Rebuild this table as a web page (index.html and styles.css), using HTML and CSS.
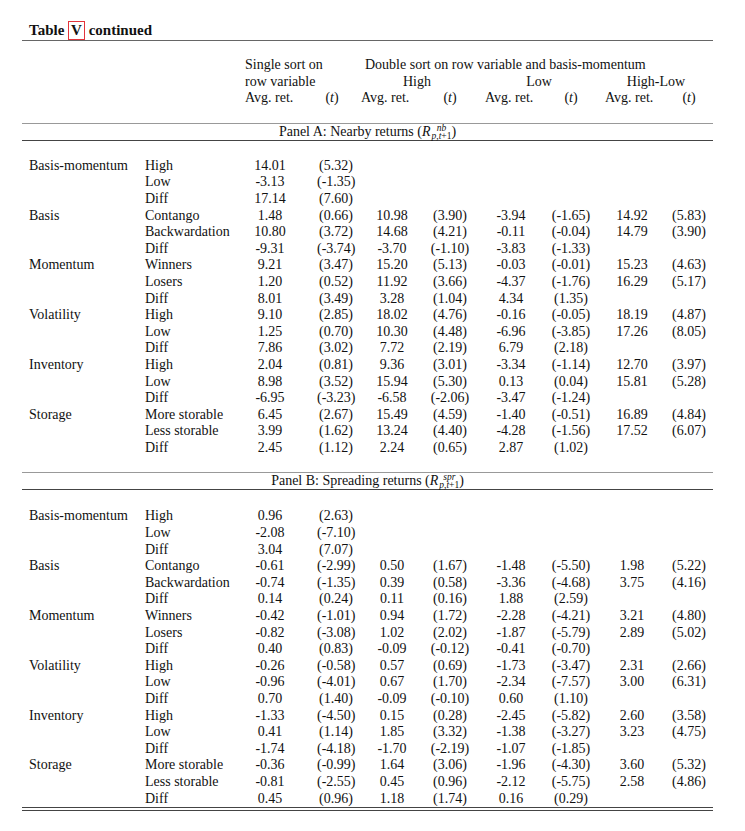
FILE: index.html
```html
<!DOCTYPE html>
<html lang="en">
<head>
  <meta charset="UTF-8">
  <meta name="viewport" content="width=device-width, initial-scale=1.0">
  <title>Table V continued</title>
  <link rel="stylesheet" href="styles.css">
</head>
<body>
  <div class="sheet">
    <div class="title">Table <span class="mark">V</span> continued</div>

    <table class="results">
      <colgroup>
        <col class="w-label"><col class="w-sub">
        <col class="w-a1"><col class="w-t1">
        <col class="w-a2"><col class="w-t2">
        <col class="w-a3"><col class="w-t3">
        <col class="w-a4"><col class="w-t4">
      </colgroup>
      <thead>
        <tr class="gap"><td colspan="10"></td></tr>
        <tr>
          <td></td><td></td>
          <td class="head-left" colspan="2">Single sort on</td>
          <td class="head-double" colspan="6">Double sort on row variable and basis-momentum</td>
        </tr>
        <tr>
          <td></td><td></td>
          <td class="head-left" colspan="2">row variable</td>
          <td class="head-center" colspan="2">High</td>
          <td class="head-center" colspan="2">Low</td>
          <td class="head-center" colspan="2">High-Low</td>
        </tr>
        <tr>
          <td></td><td></td>
          <td class="head-left">Avg. ret.</td><td class="head-t t1">(<i>t</i>)</td>
          <td class="head-left">Avg. ret.</td><td class="head-t t2">(<i>t</i>)</td>
          <td class="head-left">Avg. ret.</td><td class="head-t">(<i>t</i>)</td>
          <td class="head-left">Avg. ret.</td><td class="head-t">(<i>t</i>)</td>
        </tr>
        <tr class="gap"><td colspan="10"></td></tr>
      </thead>

      <!-- Panel A -->
      <tbody class="data">
        <tr class="panel-row">
          <td class="panel" colspan="10">Panel A: Nearby returns (<span class="math"><i>R</i><span class="scripts"><i>nb</i><span><i>p</i>,<i>t</i>+1</span></span></span>)</td>
        </tr>
        <tr class="gap-sm"><td colspan="10"></td></tr>
        <tr><td>Basis-momentum</td><td>High</td><td>14.01</td><td>(5.32)</td><td></td><td></td><td></td><td></td><td></td><td></td></tr>
        <tr><td></td><td>Low</td><td>-3.13</td><td>(-1.35)</td><td></td><td></td><td></td><td></td><td></td><td></td></tr>
        <tr><td></td><td>Diff</td><td>17.14</td><td>(7.60)</td><td></td><td></td><td></td><td></td><td></td><td></td></tr>
        <tr><td>Basis</td><td>Contango</td><td>1.48</td><td>(0.66)</td><td>10.98</td><td>(3.90)</td><td>-3.94</td><td>(-1.65)</td><td>14.92</td><td>(5.83)</td></tr>
        <tr><td></td><td>Backwardation</td><td>10.80</td><td>(3.72)</td><td>14.68</td><td>(4.21)</td><td>-0.11</td><td>(-0.04)</td><td>14.79</td><td>(3.90)</td></tr>
        <tr><td></td><td>Diff</td><td>-9.31</td><td>(-3.74)</td><td>-3.70</td><td>(-1.10)</td><td>-3.83</td><td>(-1.33)</td><td></td><td></td></tr>
        <tr><td>Momentum</td><td>Winners</td><td>9.21</td><td>(3.47)</td><td>15.20</td><td>(5.13)</td><td>-0.03</td><td>(-0.01)</td><td>15.23</td><td>(4.63)</td></tr>
        <tr><td></td><td>Losers</td><td>1.20</td><td>(0.52)</td><td>11.92</td><td>(3.66)</td><td>-4.37</td><td>(-1.76)</td><td>16.29</td><td>(5.17)</td></tr>
        <tr><td></td><td>Diff</td><td>8.01</td><td>(3.49)</td><td>3.28</td><td>(1.04)</td><td>4.34</td><td>(1.35)</td><td></td><td></td></tr>
        <tr><td>Volatility</td><td>High</td><td>9.10</td><td>(2.85)</td><td>18.02</td><td>(4.76)</td><td>-0.16</td><td>(-0.05)</td><td>18.19</td><td>(4.87)</td></tr>
        <tr><td></td><td>Low</td><td>1.25</td><td>(0.70)</td><td>10.30</td><td>(4.48)</td><td>-6.96</td><td>(-3.85)</td><td>17.26</td><td>(8.05)</td></tr>
        <tr><td></td><td>Diff</td><td>7.86</td><td>(3.02)</td><td>7.72</td><td>(2.19)</td><td>6.79</td><td>(2.18)</td><td></td><td></td></tr>
        <tr><td>Inventory</td><td>High</td><td>2.04</td><td>(0.81)</td><td>9.36</td><td>(3.01)</td><td>-3.34</td><td>(-1.14)</td><td>12.70</td><td>(3.97)</td></tr>
        <tr><td></td><td>Low</td><td>8.98</td><td>(3.52)</td><td>15.94</td><td>(5.30)</td><td>0.13</td><td>(0.04)</td><td>15.81</td><td>(5.28)</td></tr>
        <tr><td></td><td>Diff</td><td>-6.95</td><td>(-3.23)</td><td>-6.58</td><td>(-2.06)</td><td>-3.47</td><td>(-1.24)</td><td></td><td></td></tr>
        <tr><td>Storage</td><td>More storable</td><td>6.45</td><td>(2.67)</td><td>15.49</td><td>(4.59)</td><td>-1.40</td><td>(-0.51)</td><td>16.89</td><td>(4.84)</td></tr>
        <tr><td></td><td>Less storable</td><td>3.99</td><td>(1.62)</td><td>13.24</td><td>(4.40)</td><td>-4.28</td><td>(-1.56)</td><td>17.52</td><td>(6.07)</td></tr>
        <tr><td></td><td>Diff</td><td>2.45</td><td>(1.12)</td><td>2.24</td><td>(0.65)</td><td>2.87</td><td>(1.02)</td><td></td><td></td></tr>
        <tr class="gap-lg"><td colspan="10"></td></tr>
      </tbody>

      <!-- Panel B -->
      <tbody class="data last">
        <tr class="panel-row">
          <td class="panel" colspan="10">Panel B: Spreading returns (<span class="math"><i>R</i><span class="scripts"><i>spr</i><span><i>p</i>,<i>t</i>+1</span></span></span>)</td>
        </tr>
        <tr class="gap-sm b"><td colspan="10"></td></tr>
        <tr><td>Basis-momentum</td><td>High</td><td>0.96</td><td>(2.63)</td><td></td><td></td><td></td><td></td><td></td><td></td></tr>
        <tr><td></td><td>Low</td><td>-2.08</td><td>(-7.10)</td><td></td><td></td><td></td><td></td><td></td><td></td></tr>
        <tr><td></td><td>Diff</td><td>3.04</td><td>(7.07)</td><td></td><td></td><td></td><td></td><td></td><td></td></tr>
        <tr><td>Basis</td><td>Contango</td><td>-0.61</td><td>(-2.99)</td><td>0.50</td><td>(1.67)</td><td>-1.48</td><td>(-5.50)</td><td>1.98</td><td>(5.22)</td></tr>
        <tr><td></td><td>Backwardation</td><td>-0.74</td><td>(-1.35)</td><td>0.39</td><td>(0.58)</td><td>-3.36</td><td>(-4.68)</td><td>3.75</td><td>(4.16)</td></tr>
        <tr><td></td><td>Diff</td><td>0.14</td><td>(0.24)</td><td>0.11</td><td>(0.16)</td><td>1.88</td><td>(2.59)</td><td></td><td></td></tr>
        <tr><td>Momentum</td><td>Winners</td><td>-0.42</td><td>(-1.01)</td><td>0.94</td><td>(1.72)</td><td>-2.28</td><td>(-4.21)</td><td>3.21</td><td>(4.80)</td></tr>
        <tr><td></td><td>Losers</td><td>-0.82</td><td>(-3.08)</td><td>1.02</td><td>(2.02)</td><td>-1.87</td><td>(-5.79)</td><td>2.89</td><td>(5.02)</td></tr>
        <tr><td></td><td>Diff</td><td>0.40</td><td>(0.83)</td><td>-0.09</td><td>(-0.12)</td><td>-0.41</td><td>(-0.70)</td><td></td><td></td></tr>
        <tr><td>Volatility</td><td>High</td><td>-0.26</td><td>(-0.58)</td><td>0.57</td><td>(0.69)</td><td>-1.73</td><td>(-3.47)</td><td>2.31</td><td>(2.66)</td></tr>
        <tr><td></td><td>Low</td><td>-0.96</td><td>(-4.01)</td><td>0.67</td><td>(1.70)</td><td>-2.34</td><td>(-7.57)</td><td>3.00</td><td>(6.31)</td></tr>
        <tr><td></td><td>Diff</td><td>0.70</td><td>(1.40)</td><td>-0.09</td><td>(-0.10)</td><td>0.60</td><td>(1.10)</td><td></td><td></td></tr>
        <tr><td>Inventory</td><td>High</td><td>-1.33</td><td>(-4.50)</td><td>0.15</td><td>(0.28)</td><td>-2.45</td><td>(-5.82)</td><td>2.60</td><td>(3.58)</td></tr>
        <tr><td></td><td>Low</td><td>0.41</td><td>(1.14)</td><td>1.85</td><td>(3.32)</td><td>-1.38</td><td>(-3.27)</td><td>3.23</td><td>(4.75)</td></tr>
        <tr><td></td><td>Diff</td><td>-1.74</td><td>(-4.18)</td><td>-1.70</td><td>(-2.19)</td><td>-1.07</td><td>(-1.85)</td><td></td><td></td></tr>
        <tr><td>Storage</td><td>More storable</td><td>-0.36</td><td>(-0.99)</td><td>1.64</td><td>(3.06)</td><td>-1.96</td><td>(-4.30)</td><td>3.60</td><td>(5.32)</td></tr>
        <tr><td></td><td>Less storable</td><td>-0.81</td><td>(-2.55)</td><td>0.45</td><td>(0.96)</td><td>-2.12</td><td>(-5.75)</td><td>2.58</td><td>(4.86)</td></tr>
        <tr class="end-row"><td></td><td>Diff</td><td>0.45</td><td>(0.96)</td><td>1.18</td><td>(1.74)</td><td>0.16</td><td>(0.29)</td><td></td><td></td></tr>
      </tbody>
    </table>
  </div>
</body>
</html>
```

FILE: styles.css
```css
body {
  margin: 0;
  background-color: #fff;
  color: #111;
  font-family: "Liberation Serif", "Times New Roman", serif;
  font-size: 14px;
}
.sheet {
  width: 691px;
  margin-left: 22px;
  padding-top: 21px;
}
.title {
  font-weight: bold;
  font-size: 15px;
  line-height: 18px;
  padding-left: 7px;
  border-bottom: 1.5px solid #666;
}
.title .mark {
  display: inline-block;
  line-height: 17px;
  padding: 0 2px;
  border: 1px solid #e3343c;
}

/* table */
.results {
  width: 691px;
  table-layout: fixed;
  border-collapse: separate;
  border-spacing: 0;
}
.results td {
  padding: 0;
  line-height: 16.6px;
  white-space: nowrap;
}
.w-label { width: 116px; }
.w-sub { width: 101px; }
.w-a1 { width: 62px; }
.w-t1 { width: 54px; }
.w-a2 { width: 74px; }
.w-t2 { width: 50px; }
.w-a3 { width: 64px; }
.w-t3 { width: 56px; }
.w-a4 { width: 66px; }
.w-t4 { width: 48px; }

.gap td { height: 16px; line-height: 0; }
.gap-sm td { height: 17px; line-height: 0; }
.gap-sm.b td { height: 18px; }
.gap-lg td { height: 16px; line-height: 0; }

.head-left { padding-left: 6px !important; text-align: left; }
.head-double { padding-left: 10px !important; }
.head-center { text-align: center; }
.head-t { text-align: center; }
.head-t.t1 { padding-left: 8px !important; }
.head-t.t2 { padding-right: 8px !important; }

.data td:nth-child(1),
.data td:nth-child(2) { padding-left: 7px; }
.data td:nth-child(n+3) { text-align: center; }
.data td:nth-child(4) { padding-left: 16px; }
.data td:nth-child(6) { padding-right: 8px; }

.data td.panel {
  padding: 0;
  height: 16px;
  text-align: center;
  line-height: 16px;
  border-top: 1.5px solid #999;
  border-bottom: 1px solid #444;
}
.last .end-row td { border-bottom: 4px double #444; }

/* R with super- and subscript */
.math { white-space: nowrap; }
.scripts {
  display: inline-flex;
  flex-direction: column;
  vertical-align: 5px;
  margin-left: 1px;
  font-size: 9.5px;
  line-height: 8px;
}
```
